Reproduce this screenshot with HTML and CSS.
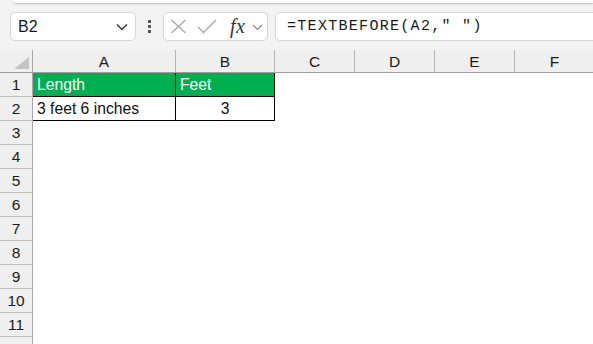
FILE: index.html
```html
<!DOCTYPE html>
<html>
<head>
<meta charset="utf-8">
<link rel="stylesheet" href="styles.css">
</head>
<body>
<div class="app">
  <div class="ribbon-edge"></div>
  <div class="formula-row">
    <div class="namebox">
      <span class="name">B2</span>
      <svg class="chev" width="12" height="8" viewBox="0 0 12 8"><path d="M1 1.5 L6 6.5 L11 1.5" fill="none" stroke="#333" stroke-width="1.4"/></svg>
    </div>
    <div class="dots"><i></i><i></i><i></i></div>
    <div class="fxbox">
      <svg class="ic" width="17" height="15" viewBox="0 0 17 15"><path d="M1.5 1 L15.5 14 M15.5 1 L1.5 14" stroke="#a6a6a6" stroke-width="1.3" fill="none"/></svg>
      <svg class="ic" width="20" height="15" viewBox="0 0 20 15"><path d="M1 8 L6.5 13.5 L19 1" stroke="#a6a6a6" stroke-width="1.3" fill="none"/></svg>
      <span class="fx">fx</span>
      <svg class="chev2" width="11" height="7" viewBox="0 0 11 7"><path d="M1 1 L5.5 5.5 L10 1" fill="none" stroke="#8a8a8a" stroke-width="1.2"/></svg>
    </div>
    <div class="formula">=TEXTBEFORE(A2," ")</div>
  </div>
  <div class="sheet">
    <div class="corner"><span class="tri"></span></div>
    <div class="ch">A</div><div class="ch">B</div><div class="ch">C</div><div class="ch">D</div><div class="ch">E</div><div class="ch">F</div>

    <div class="rh">1</div>
    <div class="c hdr bl">Length</div><div class="c hdr br bb">Feet</div><div class="c"></div><div class="c"></div><div class="c"></div><div class="c"></div>

    <div class="rh">2</div>
    <div class="c bl bb">3 feet 6 inches</div><div class="c br bb center">3</div><div class="c"></div><div class="c"></div><div class="c"></div><div class="c"></div>

    <div class="rh">3</div><div class="c"></div><div class="c"></div><div class="c"></div><div class="c"></div><div class="c"></div><div class="c"></div>
    <div class="rh">4</div><div class="c"></div><div class="c"></div><div class="c"></div><div class="c"></div><div class="c"></div><div class="c"></div>
    <div class="rh">5</div><div class="c"></div><div class="c"></div><div class="c"></div><div class="c"></div><div class="c"></div><div class="c"></div>
    <div class="rh">6</div><div class="c"></div><div class="c"></div><div class="c"></div><div class="c"></div><div class="c"></div><div class="c"></div>
    <div class="rh">7</div><div class="c"></div><div class="c"></div><div class="c"></div><div class="c"></div><div class="c"></div><div class="c"></div>
    <div class="rh">8</div><div class="c"></div><div class="c"></div><div class="c"></div><div class="c"></div><div class="c"></div><div class="c"></div>
    <div class="rh">9</div><div class="c"></div><div class="c"></div><div class="c"></div><div class="c"></div><div class="c"></div><div class="c"></div>
    <div class="rh">10</div><div class="c"></div><div class="c"></div><div class="c"></div><div class="c"></div><div class="c"></div><div class="c"></div>
    <div class="rh">11</div><div class="c"></div><div class="c"></div><div class="c"></div><div class="c"></div><div class="c"></div><div class="c"></div>
    <div class="rh"></div><div class="c"></div><div class="c"></div><div class="c"></div><div class="c"></div><div class="c"></div><div class="c"></div>
  </div>
</div>
</body>
</html>
```

FILE: styles.css
```css
* { box-sizing: border-box; }
html, body { margin: 0; padding: 0; }
body {
  width: 593px;
  height: 344px;
  overflow: hidden;
  background: #f3f3f3;
  font-family: "Liberation Sans", Arial, sans-serif;
}
.app { width: 593px; height: 344px; overflow: hidden; }
.ribbon-edge {
  height: 3px;
  margin-left: 13px;
  background: #fff;
  border-bottom-left-radius: 5px;
  box-shadow: 0 1px 2px rgba(0,0,0,0.22);
}
.formula-row {
  display: flex;
  align-items: center;
  height: 29px;
  margin-top: 9px;
  margin-bottom: 9px;
  padding-left: 10px;
}
.namebox {
  width: 126px;
  height: 29px;
  background: #fff;
  border: 1px solid #d6d6d6;
  border-radius: 5px;
  display: flex;
  align-items: center;
  justify-content: space-between;
  padding: 0 7px 0 7px;
}
.name { font-size: 16px; color: #1a1a1a; }
.chev { margin-top: 1px; }
.dots {
  width: 27px;
  display: flex;
  flex-direction: column;
  align-items: center;
  gap: 2px;
}
.dots i { display: block; width: 3px; height: 3px; background: #555; }
.fxbox {
  width: 105px;
  height: 29px;
  background: #fff;
  border: 1px solid #d6d6d6;
  border-radius: 5px;
  display: flex;
  align-items: center;
  padding-left: 6px;
}
.fxbox .ic:first-child { margin-right: 10px; }
.fx {
  margin-left: 13px;
  font-family: "Liberation Serif", "Times New Roman", serif;
  font-style: italic;
  font-size: 20px;
  color: #333;
  letter-spacing: 0.5px;
}
.chev2 { margin-left: 7px; margin-top: 2px; }
.formula {
  flex: 1;
  height: 29px;
  margin-left: 7px;
  margin-right: -10px;
  background: #fff;
  border: 1px solid #d6d6d6;
  border-radius: 5px 0 0 5px;
  display: flex;
  align-items: center;
  padding-left: 11px;
  font-family: "Liberation Mono", "DejaVu Sans Mono", monospace;
  font-size: 15px;
  letter-spacing: 1.3px;
  color: #1a1a1a;
}
.sheet {
  display: grid;
  grid-template-columns: 33px 143px 99px 80px 80px 80px 80px;
  grid-template-rows: 23px repeat(12, 24px);
  background: #fff;
}
.corner {
  position: relative;
  background: #efefef;
  border-right: 1px solid #a9a9a9;
  border-bottom: 1px solid #9e9e9e;
}
.tri {
  position: absolute;
  right: 3px;
  bottom: 3px;
  width: 0;
  height: 0;
  border-left: 15px solid transparent;
  border-bottom: 12px solid #c4c4c4;
}
.ch {
  background: #efefef;
  border-right: 1px solid #b5b5b5;
  border-bottom: 1px solid #9e9e9e;
  display: flex;
  align-items: center;
  justify-content: center;
  font-size: 15.5px;
  color: #1a1a1a;
  padding-top: 1px;
}
.rh {
  background: #efefef;
  border-right: 1px solid #a9a9a9;
  border-bottom: 1px solid #bdbdbd;
  display: flex;
  align-items: center;
  justify-content: center;
  font-size: 15.5px;
  color: #1a1a1a;
  padding-top: 1px;
}
.c {
  background: #fff;
  display: flex;
  align-items: center;
  padding-left: 4px;
  font-size: 15.7px;
  color: #111;
  padding-top: 1px;
}
.hdr { background: #00b050; color: #fff; }
.bl { border-right: 1px solid #000; }
.br { border-right: 1px solid #000; }
.bb { border-bottom: 1px solid #000; }
.hdr.bl { border-bottom: 1px solid #000; }
.center { justify-content: center; padding-left: 0; }
```
